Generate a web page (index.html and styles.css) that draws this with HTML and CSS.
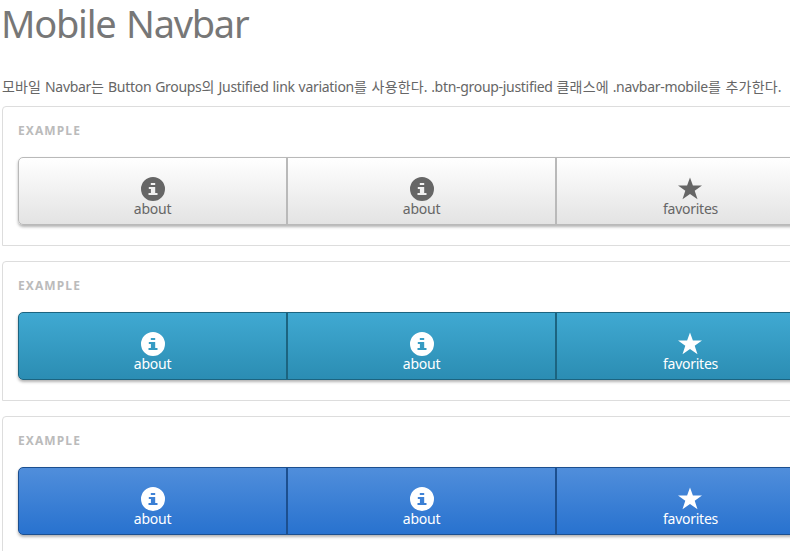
FILE: index.html
```html
<!DOCTYPE html>
<html lang="ko">
<head>
<meta charset="utf-8">
<title>Mobile Navbar</title>
<link rel="stylesheet" href="styles.css">
</head>
<body>
<svg class="defs" aria-hidden="true">
  <symbol id="info" viewBox="0 0 24 24"><path fill-rule="evenodd" d="M12 0a12 12 0 1 1 0 24a12 12 0 1 1 0-24zM9.800 6v2.100h4.400V6zM7.800 10v2h2.100v4H7.500v2h9v-2h-2.300V10z"/></symbol>
  <symbol id="star" viewBox="0 0 24 24"><path d="M12 .5l2.900 8H24l-7.300 5.200 2.800 8.600L12 17l-7.500 5.300 2.800-8.600L0 8.500h9.100z"/></symbol>
</svg>
<main class="page">
  <h1>Mobile Navbar</h1>
  <p class="lead"><span class="ko">모바일</span> Navbar<span class="ko">는</span> Button Groups<span class="ko">의</span> Justified link variation<span class="ko">를 사용한다</span>. .btn-group-justified <span class="ko">클래스에</span> .navbar-mobile<span class="ko">를 추가한다</span>.</p>
  <section class="example">
    <h2>EXAMPLE</h2>
    <nav class="navbar-mobile">
      <a class="btn"><svg><use href="#info"/></svg><span>about</span></a>
      <a class="btn"><svg><use href="#info"/></svg><span>about</span></a>
      <a class="btn"><svg><use href="#star"/></svg><span>favorites</span></a>
    </nav>
  </section>
  <section class="example">
    <h2>EXAMPLE</h2>
    <nav class="navbar-mobile teal">
      <a class="btn"><svg><use href="#info"/></svg><span>about</span></a>
      <a class="btn"><svg><use href="#info"/></svg><span>about</span></a>
      <a class="btn"><svg><use href="#star"/></svg><span>favorites</span></a>
    </nav>
  </section>
  <section class="example">
    <h2>EXAMPLE</h2>
    <nav class="navbar-mobile blue">
      <a class="btn"><svg><use href="#info"/></svg><span>about</span></a>
      <a class="btn"><svg><use href="#info"/></svg><span>about</span></a>
      <a class="btn"><svg><use href="#star"/></svg><span>favorites</span></a>
    </nav>
  </section>
</main>
</body>
</html>
```
FILE: styles.css
```css
* { box-sizing: border-box; }
html { overflow: hidden; }
body {
  margin: 0;
  height: 551px;
  overflow: hidden;
  background: #fff;
  color: #666;
  font-family: "Noto Sans", "Noto Sans CJK KR", sans-serif;
}
.defs { display: none; }
.page { width: 839px; margin-left: 2px; }
h1 {
  margin: 0 0 0 -1px;
  height: 76px;
  font-size: 38px;
  line-height: 47px;
  font-weight: 400;
  letter-spacing: -1.25px;
  word-spacing: 2px;
  color: #777;
}
.lead {
  margin: 0;
  height: 30px;
  font-size: 14px;
  line-height: 20px;
  letter-spacing: -0.3px;
  word-spacing: 0.6px;
  white-space: nowrap;
}
.ko {
  font-family: "Noto Sans CJK KR", sans-serif;
  font-weight: 400;
  letter-spacing: 0.15px;
}
.example {
  height: 140px;
  margin-bottom: 15px;
  padding: 16px 15px 0;
  border: 1px solid #ddd;
  border-radius: 4px 4px 0 0;
}
h2 {
  margin: 0 0 18px;
  font-size: 12px;
  line-height: 16px;
  font-weight: 700;
  letter-spacing: 1.1px;
  color: #bbb;
}
.navbar-mobile {
  --edge: #b9b9b9;
  display: grid;
  grid-template-columns: 269px 269px 267px;
  height: 68px;
  border: 1px solid var(--edge);
  border-radius: 5px;
  background: linear-gradient(#fff, #e3e3e3);
  box-shadow: 0 2px 3px rgba(0, 0, 0, 0.3);
  color: #666;
}
.teal {
  --edge: #1c6480;
  background: linear-gradient(#40a9d2, #2b8db3);
  color: #fff;
}
.blue {
  --edge: #1c4f8f;
  background: linear-gradient(#508edb, #2872cf);
  color: #fff;
}
.btn {
  display: flex;
  flex-direction: column;
  align-items: center;
  padding-top: 19px;
  font-size: 14px;
  line-height: 16px;
}
.btn:not(:last-child) { border-right: 2px solid var(--edge); }
.btn svg { width: 24px; height: 24px; fill: currentColor; }
.btn:last-child svg { margin-right: 2px; }
.btn span { letter-spacing: -0.25px; }
```
